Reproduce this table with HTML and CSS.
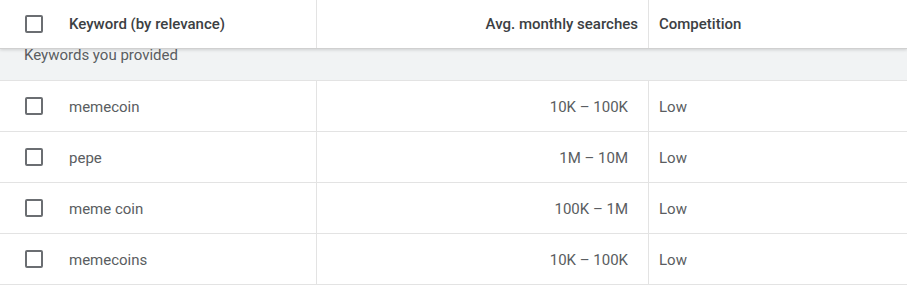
FILE: index.html
```html
<!DOCTYPE html>
<html>
<head>
<meta charset="utf-8">
<link rel="stylesheet" href="styles.css">
</head>
<body>
<div class="table">
  <div class="row header">
    <div class="cell kw"><span class="cb"></span><span class="label">Keyword (by relevance)</span></div>
    <div class="cell num">Avg. monthly searches</div>
    <div class="cell comp">Competition</div>
  </div>
  <div class="group">Keywords you provided</div>
  <div class="row data">
    <div class="cell kw"><span class="cb"></span><span class="label">memecoin</span></div>
    <div class="cell num">10K – 100K</div>
    <div class="cell comp">Low</div>
  </div>
  <div class="row data">
    <div class="cell kw"><span class="cb"></span><span class="label">pepe</span></div>
    <div class="cell num">1M – 10M</div>
    <div class="cell comp">Low</div>
  </div>
  <div class="row data">
    <div class="cell kw"><span class="cb"></span><span class="label">meme coin</span></div>
    <div class="cell num">100K – 1M</div>
    <div class="cell comp">Low</div>
  </div>
  <div class="row data">
    <div class="cell kw"><span class="cb"></span><span class="label">memecoins</span></div>
    <div class="cell num">10K – 100K</div>
    <div class="cell comp">Low</div>
  </div>
</div>
</body>
</html>
```
FILE: styles.css
```css
html, body {
  margin: 0;
  padding: 0;
  background: #fff;
}
body {
  font-family: Roboto, "Liberation Sans", sans-serif;
  font-size: 15px;
  color: #5a5d61;
}
.table {
  width: 907px;
}
.row {
  display: grid;
  grid-template-columns: 317px 332px 1fr;
  border-bottom: 1px solid #e3e3e3;
}
.cell {
  display: flex;
  align-items: center;
  box-sizing: border-box;
}
.cell.kw {
  border-right: 1px solid #e3e3e3;
  padding-left: 25px;
}
.cell.num {
  border-right: 1px solid #e3e3e3;
  justify-content: flex-end;
  padding-right: 20px;
}
.cell.comp {
  padding-left: 10px;
}
.cb {
  width: 18px;
  height: 18px;
  box-sizing: border-box;
  border: 2px solid #6b6e72;
  border-radius: 2px;
  flex: none;
}
.label {
  margin-left: 26px;
}
.header {
  height: 48px;
  font-weight: 500;
  color: #3c4043;
  border-bottom: 1px solid #d0d0d0;
  box-shadow: 0 1px 3px rgba(0,0,0,0.15);
  position: relative;
  z-index: 1;
}
.header .cell.num {
  padding-right: 10px;
}
.group {
  height: 32px;
  background: #f1f3f4;
  color: #5a5d61;
  padding-left: 24px;
  box-sizing: border-box;
  line-height: 13px;
  display: flex;
  align-items: flex-start;
  border-bottom: 1px solid #e3e3e3;
}
.data {
  height: 51px;
  box-sizing: border-box;
}
.data .label,
.data .cell.num,
.data .cell.comp {
  padding-top: 2px;
}
```
